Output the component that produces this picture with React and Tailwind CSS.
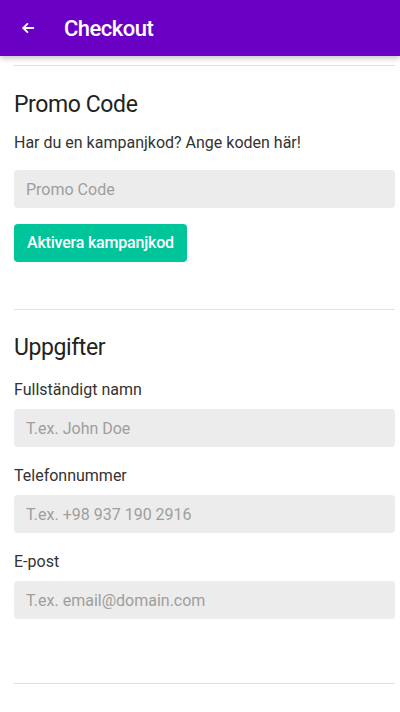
import React from "react";

function Field({ label, placeholder }) {
  return (
    <div className="flex flex-col">
      <label className="text-[16px] leading-[20px] text-[#333] mb-[9px]">{label}</label>
      <input
        type="text"
        placeholder={placeholder}
        className="h-[38px] w-full rounded-[4px] bg-[#ececec] px-3 text-[16px] text-[#333] placeholder:text-[#9e9e9e] outline-none"
      />
    </div>
  );
}

export default function App() {
  return (
    <div className="h-[712px] bg-white font-['Roboto',sans-serif] overflow-hidden">
      {/* Header */}
      <div className="h-[56px] bg-[#6b00c5] flex items-center shadow-[0_2px_6px_rgba(0,0,0,0.25)] relative z-10">
        <button className="w-[56px] h-[56px] flex items-center justify-center text-white">
          <svg width="14" height="14" viewBox="0 0 24 24" fill="none" stroke="currentColor" strokeWidth="3.2" strokeLinecap="round" strokeLinejoin="round">
            <path d="M21 12H4" />
            <path d="M11 5l-7 7 7 7" />
          </svg>
        </button>
        <h1 className="text-white text-[22px] font-medium tracking-[-0.5px] ml-[8px]">Checkout</h1>
      </div>

      <div className="pl-[14px] pr-[5px] pt-[9px]">
        <hr className="border-t border-[#e0e0e0]" />

        {/* Promo */}
        <section className="pt-[25px] pb-[47px]">
          <h2 className="text-[23px] leading-[28px] font-normal text-[#222] tracking-[-0.4px]">Promo Code</h2>
          <p className="mt-[14px] text-[16px] leading-[20px] text-[#333]">Har du en kampanjkod? Ange koden här!</p>
          <input
            type="text"
            placeholder="Promo Code"
            className="mt-[17px] h-[38px] w-full rounded-[4px] bg-[#ececec] px-3 text-[16px] placeholder:text-[#9e9e9e] outline-none"
          />
          <button className="mt-[16px] h-[38px] px-[13px] rounded-[4px] bg-[#00c49a] text-white text-[16px] font-medium tracking-[-0.2px]">
            Aktivera kampanjkod
          </button>
        </section>

        <hr className="border-t border-[#e0e0e0]" />

        {/* Details */}
        <section className="pt-[24px] pb-[64px]">
          <h2 className="text-[23px] leading-[28px] font-normal text-[#222] tracking-[-0.4px] mb-[18px]">Uppgifter</h2>
          <div className="flex flex-col gap-[19px]">
            <Field label="Fullständigt namn" placeholder="T.ex. John Doe" />
            <Field label="Telefonnummer" placeholder="T.ex. +98 937 190 2916" />
            <Field label="E-post" placeholder="T.ex. email@domain.com" />
          </div>
        </section>

        <hr className="border-t border-[#e0e0e0]" />
        <section className="pt-[26px]">
          <h2 className="text-[23px] leading-[28px] font-normal text-[#222] tracking-[-0.4px]">Betalning</h2>
        </section>
      </div>
    </div>
  );
}
